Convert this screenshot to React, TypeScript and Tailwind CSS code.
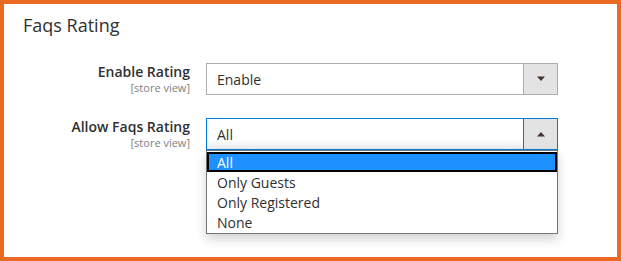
const OPTIONS = ["All", "Only Guests", "Only Registered", "None"];

function Arrow({ up }: { up?: boolean }) {
  return (
    <svg width="10" height="6" viewBox="0 0 10 6" className="block">
      <path d={up ? "M1 5.5 L5 1 L9 5.5 Z" : "M1 0.5 L9 0.5 L5 5 Z"} fill="#41362f" />
    </svg>
  );
}

function Field({ label, children }: { label: string; children: React.ReactNode }) {
  return (
    <div className="flex gap-4">
      <div className="w-[186px] shrink-0 text-right pt-[1px]">
        <div className="text-[14px] leading-[16px] font-semibold text-[#303030]">{label}</div>
        <div className="text-[11px] leading-[12px] mt-[2px] text-[#808080]">[store view]</div>
      </div>
      {children}
    </div>
  );
}

export default function App() {
  return (
    <div
      className="w-[621px] h-[261px] border-4 border-[#ea6a24] bg-white text-[#303030]"
      style={{ fontFamily: '"Open Sans", "Liberation Sans", sans-serif' }}
    >
      <h2 className="pl-[19px] pt-[9px] text-[18px] leading-[24px] font-normal text-[#303030]">Faqs Rating</h2>

      <div className="mt-[26px] flex flex-col gap-[23px]">
        <Field label="Enable Rating">
          <div className="w-[352px] h-[32px] border border-[#adadad] flex">
            <div className="flex-1 pl-[10px] flex items-center text-[14px]">Enable</div>
            <div className="w-[34px] bg-[#e3e3e3] border-l border-[#adadad] flex items-center justify-center">
              <Arrow />
            </div>
          </div>
        </Field>

        <Field label="Allow Faqs Rating">
          <div className="relative w-[352px]">
            <div className="h-[32px] border border-[#007bdb] flex bg-gradient-to-b from-white from-[65%] to-[#ececec]">
              <div className="flex-1 pl-[10px] flex items-center text-[14px]">All</div>
              <div className="w-[34px] bg-[#e3e3e3] border-l border-[#007bdb] flex items-center justify-center">
                <Arrow up />
              </div>
            </div>
            <ul className="absolute left-0 top-[32px] w-[352px] border border-[#767676] bg-white shadow-[0_5px_10px_rgba(0,0,0,0.18)] py-[1px]">
              {OPTIONS.map((o, i) => (
                <li
                  key={o}
                  className={`h-[20px] pl-[10px] flex items-center text-[14px] ${
                    i === 0 ? "bg-[#1e90ff] text-white outline-2 outline-black -outline-offset-2" : "text-[#303030]"
                  }`}
                >
                  {o}
                </li>
              ))}
            </ul>
          </div>
        </Field>
      </div>
    </div>
  );
}
